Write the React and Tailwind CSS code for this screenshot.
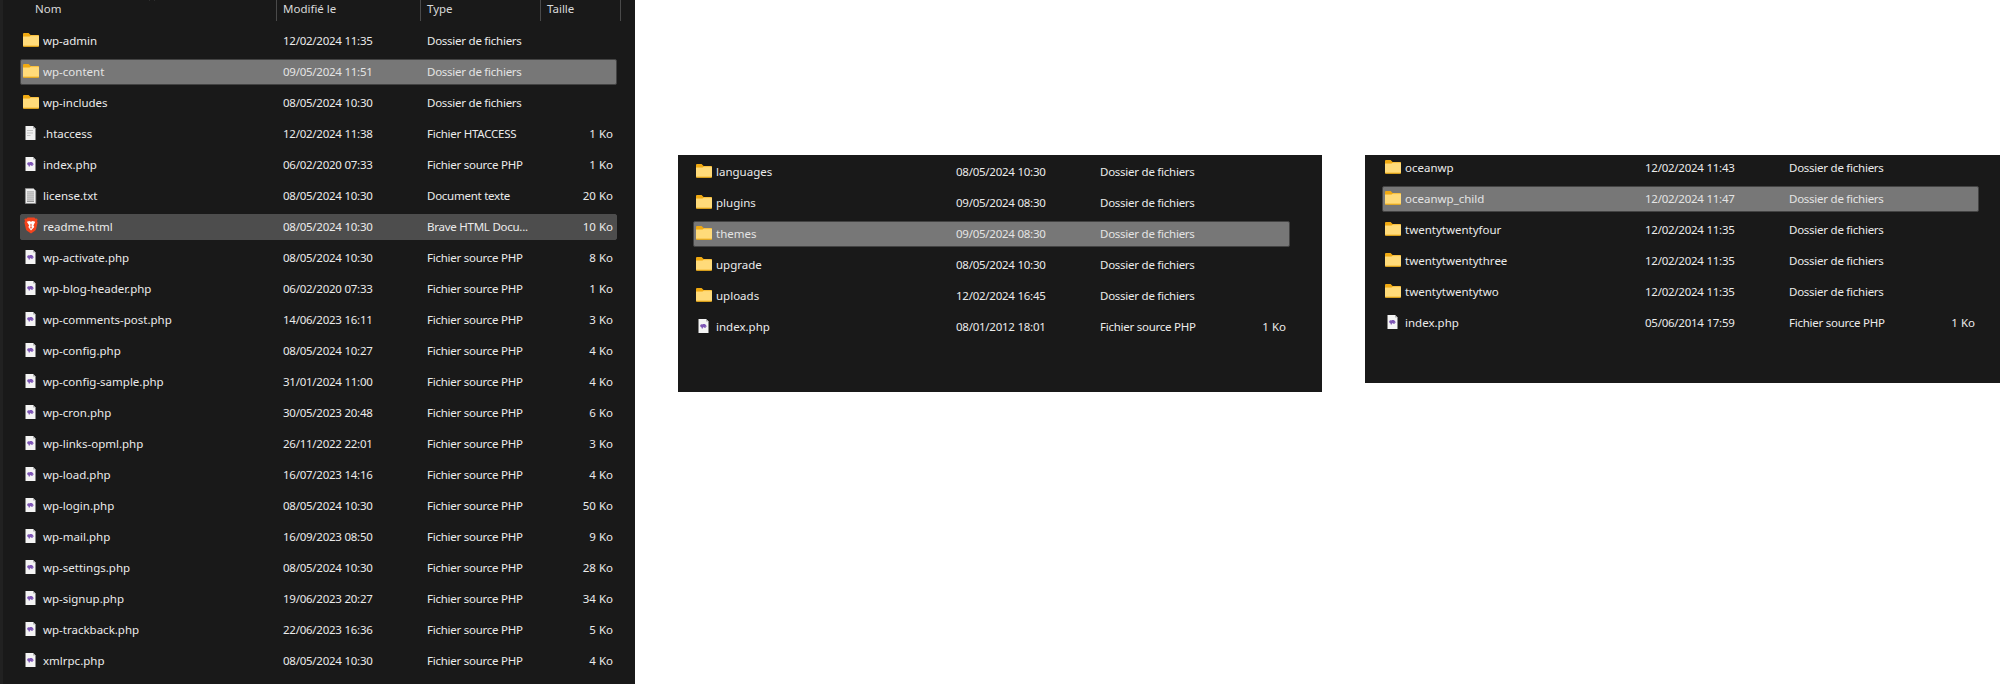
import React from "react";
import { ChevronUp } from "lucide-react";

const font = "[font-family:'Noto_Sans',sans-serif]";

function FolderIcon() {
  return (
    <svg width="16" height="14" viewBox="0 0 16 14" className="shrink-0 -mt-[2px]">
      <path d="M0 1.2C0 .5.5 0 1.2 0h3.9c.4 0 .7.1 1 .4L7.6 2H15c.6 0 1 .4 1 1v2H0z" fill="#f0a911" />
      <path d="M0 3.4h6.4L8 2.4h7c.6 0 1 .4 1 1V12.4c0 .7-.5 1.2-1.2 1.2H1.2C.5 13.6 0 13.1 0 12.4z" fill="#ffd871" />
      <path d="M0 12.2c0 .9.5 1.6 1.2 1.6h13.6c.7 0 1.2-.7 1.2-1.6z" fill="#eda90f" />
      <rect x="0" y="4" width="16" height="8.6" fill="#ffdb7a" />
    </svg>
  );
}

// php source file: white sheet with the purple elephant
function PhpIcon() {
  return (
    <svg width="16" height="14" viewBox="0 0 16 14" className="shrink-0 -mt-[2px]">
      <path d="M2.5 0h7.5l2.5 2.5V14h-10z" fill="#f4f4f4" />
      <path d="M10 0l2.5 2.5H10z" fill="#b5b5b5" />
      <path d="M4.2 6.2c.5-1 1.6-1.2 2.2-.7.6-.5 2-.6 3 0 .8.5 1.2 1.4 1.2 2.5-.5-.2-.8-.4-1-.5v1.6H8.4V8.2H6.9v1.4H5.7V8.4c-.9 0-1.7-1-1.5-2.2z" fill="#7d55b5" />
    </svg>
  );
}

function HtaccessIcon() {
  return (
    <svg width="16" height="14" viewBox="0 0 16 14" className="shrink-0 -mt-[2px]">
      <path d="M2.5 0h7.5l2.5 2.5V14h-10z" fill="#f1f1f1" />
      <path d="M10 0l2.5 2.5H10z" fill="#a9a9a9" />
      <rect x="4" y="4" width="6" height="1" fill="#c3c3c3" />
      <rect x="4" y="6.5" width="6" height="1" fill="#c3c3c3" />
      <rect x="4" y="9" width="3.5" height="1" fill="#c3c3c3" />
    </svg>
  );
}

function TxtIcon() {
  return (
    <svg width="16" height="16" viewBox="0 0 16 16" className="shrink-0 -my-[1px]">
      <path d="M2.4.4h8l2.4 2.4v12.8H2.4z" fill="#ededed" stroke="#8f8f8f" strokeWidth=".7" />
      {[3.5, 5.5, 7.5, 9.5, 11.5, 13].map((y) => (
        <rect key={y} x="4" y={y} width="7" height=".9" fill="#8c8c8c" />
      ))}
    </svg>
  );
}

function BraveIcon() {
  return (
    <svg width="16" height="17" viewBox="0 0 16 17" className="shrink-0 -mt-[3px]">
      <path d="M4.6.5h6.8l1.2 1.3 1.4-.2.6 1.2-.6 1.3.6 1.4-1.5 6.6c-.2.7-.5 1.2-1.1 1.6L8 16.5l-4-2.8c-.6-.4-.9-.9-1.1-1.6L1.4 5.5 2 4.1l-.6-1.3.6-1.2 1.4.2z" fill="#f3431d" />
      <path d="M3.8 4.8 6.4 4.1 8 4.7l1.6-.6 2.6.7-1.8 3.6.9 1.7L8 13.4l-2.7-3.3.9-1.7z" fill="#fff" />
      <path d="M8 6.8v3M6.9 10.8h2.2" stroke="#f3431d" strokeWidth="1" />
    </svg>
  );
}

function FileIcon({ kind }) {
  if (kind === "folder") return <FolderIcon />;
  if (kind === "php") return <PhpIcon />;
  if (kind === "brave") return <BraveIcon />;
  if (kind === "txt") return <TxtIcon />;
  return <HtaccessIcon />;
}

const FOLDER = "Dossier de fichiers";
const PHP = "Fichier source PHP";

const mainRows = [
  ["folder", "wp-admin", "12/02/2024 11:35", FOLDER, ""],
  ["folder", "wp-content", "09/05/2024 11:51", FOLDER, "", "selected"],
  ["folder", "wp-includes", "08/05/2024 10:30", FOLDER, ""],
  ["htaccess", ".htaccess", "12/02/2024 11:38", "Fichier HTACCESS", "1 Ko"],
  ["php", "index.php", "06/02/2020 07:33", PHP, "1 Ko"],
  ["txt", "license.txt", "08/05/2024 10:30", "Document texte", "20 Ko"],
  ["brave", "readme.html", "08/05/2024 10:30", "Brave HTML Docu...", "10 Ko", "hover"],
  ["php", "wp-activate.php", "08/05/2024 10:30", PHP, "8 Ko"],
  ["php", "wp-blog-header.php", "06/02/2020 07:33", PHP, "1 Ko"],
  ["php", "wp-comments-post.php", "14/06/2023 16:11", PHP, "3 Ko"],
  ["php", "wp-config.php", "08/05/2024 10:27", PHP, "4 Ko"],
  ["php", "wp-config-sample.php", "31/01/2024 11:00", PHP, "4 Ko"],
  ["php", "wp-cron.php", "30/05/2023 20:48", PHP, "6 Ko"],
  ["php", "wp-links-opml.php", "26/11/2022 22:01", PHP, "3 Ko"],
  ["php", "wp-load.php", "16/07/2023 14:16", PHP, "4 Ko"],
  ["php", "wp-login.php", "08/05/2024 10:30", PHP, "50 Ko"],
  ["php", "wp-mail.php", "16/09/2023 08:50", PHP, "9 Ko"],
  ["php", "wp-settings.php", "08/05/2024 10:30", PHP, "28 Ko"],
  ["php", "wp-signup.php", "19/06/2023 20:27", PHP, "34 Ko"],
  ["php", "wp-trackback.php", "22/06/2023 16:36", PHP, "5 Ko"],
  ["php", "xmlrpc.php", "08/05/2024 10:30", PHP, "4 Ko"],
];

const contentRows = [
  ["folder", "languages", "08/05/2024 10:30", FOLDER, ""],
  ["folder", "plugins", "09/05/2024 08:30", FOLDER, ""],
  ["folder", "themes", "09/05/2024 08:30", FOLDER, "", "selected"],
  ["folder", "upgrade", "08/05/2024 10:30", FOLDER, ""],
  ["folder", "uploads", "12/02/2024 16:45", FOLDER, ""],
  ["php", "index.php", "08/01/2012 18:01", PHP, "1 Ko"],
];

const themeRows = [
  ["folder", "oceanwp", "12/02/2024 11:43", FOLDER, ""],
  ["folder", "oceanwp_child", "12/02/2024 11:47", FOLDER, "", "selected"],
  ["folder", "twentytwentyfour", "12/02/2024 11:35", FOLDER, ""],
  ["folder", "twentytwentythree", "12/02/2024 11:35", FOLDER, ""],
  ["folder", "twentytwentytwo", "12/02/2024 11:35", FOLDER, ""],
  ["php", "index.php", "05/06/2014 17:59", PHP, "1 Ko"],
];

function Row({ row }) {
  const [icon, name, date, type, size, state] = row;
  let look = "border-transparent text-[#ebebeb]";
  if (state === "selected") look = "bg-[#777777] border-[#434343] text-[#e4e4e4]";
  if (state === "hover") look = "bg-[#4d4d4d] border-[#4d4d4d] text-[#ebebeb]";
  return (
    <div className={`flex items-center h-[26px] w-[597px] border rounded-[2px] text-[11.5px] ${look}`}>
      <div className="flex items-center w-[262px] pl-[2px] gap-[4px]">
        <FileIcon kind={icon} />
        <span className="whitespace-nowrap">{name}</span>
      </div>
      <div className="w-[144px] whitespace-nowrap tracking-[-0.25px]">{date}</div>
      <div className="w-[130px] whitespace-nowrap tracking-[-0.25px]">{type}</div>
      <div className="flex-1 text-right pr-[3px] whitespace-nowrap">{size}</div>
    </div>
  );
}

function Rows({ rows }) {
  return (
    <div className="flex flex-col gap-[5px]">
      {rows.map((row) => (
        <Row key={row[1]} row={row} />
      ))}
    </div>
  );
}

function HeaderCell({ label, width, pad, children }) {
  return (
    <div className={`relative flex items-start h-[21px] border-r border-[#4a4a4a] text-[11.5px] text-[#d9d9d9] ${width} ${pad}`}>
      <span className="leading-[18px]">{label}</span>
      {children}
    </div>
  );
}

export default function App() {
  return (
    <div className={`flex items-start h-[684px] w-[2000px] bg-white overflow-hidden ${font}`}>
      <div className="w-[635px] h-[684px] bg-[#191919] border-l-[3px] border-[#212121] pl-[17px]">
        <div className="flex h-[28px] -ml-[20px]">
          <HeaderCell label="Nom" width="w-[277px]" pad="pl-[35px]">
            <ChevronUp className="absolute left-[146px] -top-[5px] w-[12px] h-[8px] text-[#8a8a8a]" />
          </HeaderCell>
          <HeaderCell label="Modifié le" width="w-[144px]" pad="pl-[6px]" />
          <HeaderCell label="Type" width="w-[120px]" pad="pl-[6px]" />
          <HeaderCell label="Taille" width="w-[80px]" pad="pl-[6px]" />
        </div>
        <Rows rows={mainRows} />
      </div>
      <div className="ml-[43px] mt-[155px] w-[644px] h-[237px] bg-[#191919] pt-[4px] pl-[15px]">
        <Rows rows={contentRows} />
      </div>
      <div className="ml-[43px] mt-[155px] w-[635px] h-[228px] bg-[#191919] pl-[17px]">
        <Rows rows={themeRows} />
      </div>
    </div>
  );
}
